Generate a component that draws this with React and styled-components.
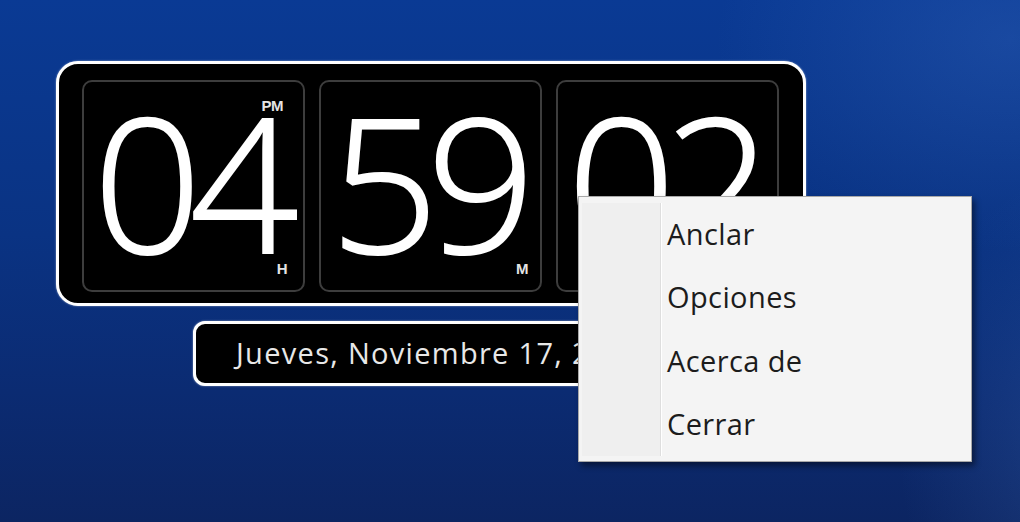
import React from "react";
import styled, { createGlobalStyle } from "styled-components";

const Global = createGlobalStyle`
  html, body { margin: 0; padding: 0; }
  body { width: 1020px; height: 522px; overflow: hidden; font-family: "Open Sans", "Noto Sans", sans-serif; }
`;

const Desktop = styled.div`
  position: relative;
  width: 1020px;
  height: 522px;
  overflow: hidden;
  box-sizing: border-box;
  padding: 61px 0 0 56px;
  background:
    radial-gradient(ellipse 420px 300px at 1010px 40px, rgba(70, 120, 205, 0.25), rgba(70, 120, 205, 0) 70%),
    radial-gradient(ellipse 260px 380px at 1080px 440px, rgba(80, 130, 210, 0.22), rgba(80, 130, 210, 0) 70%),
    linear-gradient(180deg, #0a3a94 0%, #0a3383 45%, #0b2b72 75%, #0c2562 100%);
`;

const Widget = styled.div`
  display: flex;
  flex-direction: column;
  gap: 15px;
  width: 750px;
`;

const Clock = styled.div`
  box-sizing: border-box;
  width: 750px;
  height: 245px;
  border: 3px solid #ffffff;
  border-radius: 22px;
  background: #000;
  padding: 16px 24px 11px 23px;
  display: flex;
  gap: 14px;
  box-shadow: 0 0 2px rgba(255, 255, 255, 0.6);
`;

const Tile = styled.div`
  position: relative;
  box-sizing: border-box;
  width: 223px;
  height: 212px;
  border: 2px solid #3d3d3d;
  border-radius: 10px;
  background: #000;
  display: flex;
  align-items: center;
  justify-content: center;
`;

const Digits = styled.span`
  display: inline-block;
  font-family: "Open Sans", "Noto Sans", sans-serif;
  font-weight: 300;
  font-size: 187px;
  line-height: 1;
  letter-spacing: -12px;
  color: #ffffff;
  padding-bottom: 12px;
  -webkit-text-stroke: 2px #fff;
  transform: translateX(-4px) scaleX(1.02);
`;

const Tag = styled.span`
  position: absolute;
  right: ${(p) => p.$right}px;
  ${(p) => (p.$top ? `top: 16px;` : `bottom: 14px;`)}
  font-family: "Liberation Sans", Arial, sans-serif;
  font-weight: 700;
  font-size: 15px;
  line-height: 1;
  letter-spacing: -0.5px;
  color: #e4e4e4;
`;

const DateBox = styled.div`
  box-sizing: border-box;
  margin-left: 137px;
  width: 476px;
  height: 65px;
  border: 3px solid #ffffff;
  border-radius: 12px;
  background: #000;
  display: flex;
  align-items: center;
  padding-left: 40px;
  padding-bottom: 2px;
  font-family: "Open Sans", "Noto Sans", sans-serif;
  font-size: 29px;
  letter-spacing: 1.3px;
  color: #e8e8e8;
  white-space: nowrap;
  overflow: hidden;
  box-shadow: 0 0 2px rgba(255, 255, 255, 0.6);
`;

const Menu = styled.div`
  position: absolute;
  left: 578px;
  top: 196px;
  width: 394px;
  height: 266px;
  box-sizing: border-box;
  background: #f4f4f4;
  border: 1px solid #a8a8a8;
  box-shadow: 3px 4px 6px rgba(0, 0, 0, 0.45);
  padding: 6px 3px 5px 3px;
  display: flex;
`;

const Gutter = styled.div`
  width: 78px;
  background: #efefef;
  border-right: 1px solid #dedede;
  box-shadow: 1px 0 0 #ffffff;
`;

const Items = styled.ul`
  list-style: none;
  margin: 0;
  padding: 0 0 0 6px;
  display: flex;
  flex-direction: column;
`;

const Item = styled.li`
  height: 63px;
  display: flex;
  align-items: center;
  padding-bottom: 2px;
  font-family: "Open Sans", "Noto Sans", sans-serif;
  font-size: 29px;
  color: #1c1c1c;
  letter-spacing: 0.4px;
`;

const tiles = [
  { value: "04", top: "PM", bottom: "H", topRight: 20, bottomRight: 16 },
  { value: "59", bottom: "M", bottomRight: 12 },
  { value: "02", bottom: "S", bottomRight: 12 },
];

export default function App() {
  return (
    <>
      <Global />
      <Desktop>
        <Widget>
          <Clock>
            {tiles.map((t) => (
              <Tile key={t.value}>
                <Digits>{t.value}</Digits>
                {t.top && (
                  <Tag $top $right={t.topRight}>
                    {t.top}
                  </Tag>
                )}
                <Tag $right={t.bottomRight}>{t.bottom}</Tag>
              </Tile>
            ))}
          </Clock>
          <DateBox>Jueves, Noviembre 17, 2011</DateBox>
        </Widget>
        <Menu>
          <Gutter />
          <Items>
            <Item>Anclar</Item>
            <Item>Opciones</Item>
            <Item>Acerca de</Item>
            <Item>Cerrar</Item>
          </Items>
        </Menu>
      </Desktop>
    </>
  );
}
